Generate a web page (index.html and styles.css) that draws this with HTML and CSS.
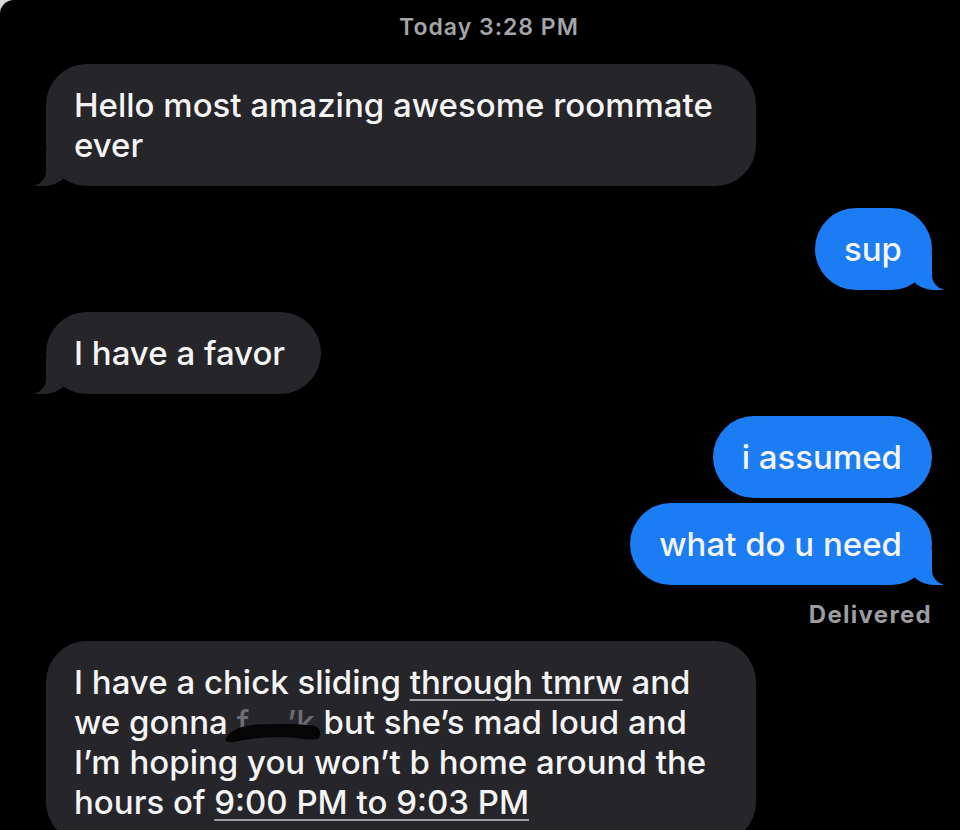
FILE: index.html
```html
<!DOCTYPE html>
<html lang="en">

<head>
    <meta charset="UTF-8">
    <meta name="viewport" content="width=device-width, initial-scale=1.0">
    <title>Messages</title>
    <link rel="stylesheet" href="styles.css">
</head>

<body>
    <div class="chat">
        <p class="stamp">Today 3:28 PM</p>

        <div class="row in">
            <div class="bubble tail">Hello most amazing awesome roommate ever</div>
        </div>

        <div class="row out">
            <div class="bubble tail">sup</div>
        </div>

        <div class="row in">
            <div class="bubble tail">I have a favor</div>
        </div>

        <div class="row out">
            <div class="bubble">i assumed</div>
        </div>
        <div class="row out grouped">
            <div class="bubble tail">what do u need</div>
        </div>
        <p class="status">Delivered</p>

        <div class="row in">
            <div class="bubble">I have a chick sliding <span class="link">through tmrw</span> and we gonna <span class="censor">f<i class="gap"></i>’k<svg class="blob" viewBox="0 0 100 30" preserveAspectRatio="none"><path d="M2 26 C6 14 18 8 34 7 C52 6 72 6 90 8 C97 10 99 18 96 24 C90 28 80 24 66 23 C48 22 28 24 14 28 C8 30 3 29 2 26 Z" /></svg></span> but she’s mad loud and I’m hoping you won’t b home around the hours of <span class="link">9:00 PM to 9:03 PM</span></div>
        </div>
    </div>
</body>

</html>
```

FILE: styles.css
```css
body {
    margin: 0;
    background-color: #d8d8d8;
    font-family: Inter, "Noto Sans", sans-serif;
}

.chat {
    min-height: 830px;
    box-sizing: border-box;
    padding: 13px 28px 0 46px;
    background-color: #000000;
    border-top-left-radius: 14px;
    overflow: hidden;
}

.stamp {
    margin: 0 0 23px;
    text-align: center;
    font-size: 23px;
    line-height: 28px;
    font-weight: 600;
    letter-spacing: 1px;
    color: #a4a4a9;
}

.row {
    display: flex;
    margin-top: 22px;
}

.row:first-of-type {
    margin-top: 0;
}

.row.out {
    justify-content: flex-end;
}

.row.grouped {
    margin-top: 5px;
}

.bubble {
    position: relative;
    max-width: 710px;
    box-sizing: border-box;
    padding: 21px 36px 21px 28px;
    border-radius: 41px;
    font-size: 33px;
    line-height: 40px;
    font-weight: 500;
    color: #f4f4f4;
    background-color: #262529;
}

.out .bubble {
    padding: 21px 30px 21px 29px;
    background-color: #1b7cf3;
}

/* tails */
.bubble.tail::before,
.bubble.tail::after {
    content: "";
    position: absolute;
    bottom: 0;
    height: 36px;
}

.in .bubble.tail::before {
    left: -11px;
    width: 34px;
    background-color: #262529;
    border-bottom-right-radius: 26px 20px;
}

.in .bubble.tail::after {
    left: -40px;
    width: 40px;
    background-color: #000000;
    border-bottom-right-radius: 15px;
}

.out .bubble.tail::before {
    right: -11px;
    width: 34px;
    background-color: #1b7cf3;
    border-bottom-left-radius: 26px 20px;
}

.out .bubble.tail::after {
    right: -40px;
    width: 40px;
    background-color: #000000;
    border-bottom-left-radius: 15px;
}

.status {
    margin: 16px 0 0;
    text-align: right;
    font-size: 24px;
    line-height: 28px;
    font-weight: 700;
    letter-spacing: 1.3px;
    color: #9c9ca1;
}

.status + .row {
    margin-top: 12px;
}

.link {
    text-decoration: underline;
    text-decoration-color: #9d9da2;
    text-decoration-thickness: 2px;
    text-underline-offset: 5px;
}

.censor {
    position: relative;
    color: #6d6d70;
}

.gap {
    display: inline-block;
    width: 38px;
}

.blob {
    position: absolute;
    left: -14px;
    top: 17px;
    width: 100px;
    height: 24px;
    fill: #050505;
}
```
